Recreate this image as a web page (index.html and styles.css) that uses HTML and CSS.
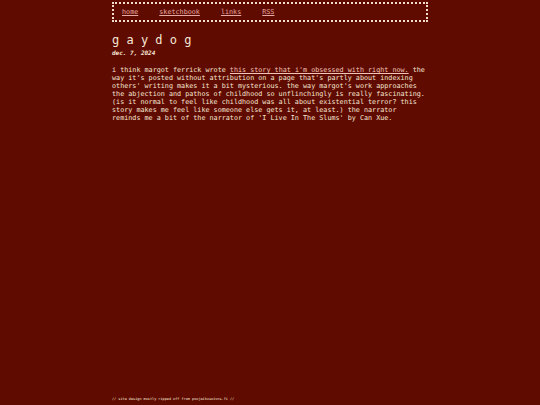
FILE: index.html
```html
<!DOCTYPE html>
<html lang="en">
<head>
<meta charset="utf-8">
<title>gaydog</title>
<link rel="stylesheet" href="styles.css">
</head>
<body>
<div class="page">
  <nav class="nav">
    <a href="#">home</a>
    <a href="#">sketchbook</a>
    <a href="#">links</a>
    <a href="#">RSS</a>
  </nav>
  <main class="post">
    <h1 class="title">g a y d o g</h1>
    <p class="date">dec. 7, 2024</p>
    <p class="body">i think margot ferrick wrote <a href="#">this story that i'm obsessed with right now.</a> the way it's posted without attribution on a page that's partly about indexing others' writing makes it a bit mysterious. the way margot's work approaches the abjection and pathos of childhood so unflinchingly is really fascinating. (is it normal to feel like childhood was all about existential terror? this story makes me feel like someone else gets it, at least.) the narrator reminds me a bit of the narrator of 'I Live In The Slums' by Can Xue.</p>
  </main>
  <footer class="foot">// site design mostly ripped off from poujaikusoivns.fi //</footer>
</div>
</body>
</html>
```

FILE: styles.css
```css
html, body {
  margin: 0;
  padding: 0;
}
body {
  background: #600b00;
  color: #f6e6d6;
  font-family: "DejaVu Sans Mono", "Liberation Mono", monospace;
}
.page {
  width: 316px;
  margin: 0 auto;
  min-height: 100vh;
  display: flex;
  flex-direction: column;
  box-sizing: border-box;
}
.nav {
  margin-top: 2px;
  height: 20px;
  box-sizing: border-box;
  border: 2px dotted #f3dccb;
  padding: 0 8px;
  display: flex;
  align-items: center;
  gap: 21px;
  font-size: 6.75px;
}
.nav a {
  color: #e6a9a4;
}
.title {
  margin: 11px 0 0;
  font-size: 12px;
  line-height: 14px;
  font-weight: normal;
}
.date {
  margin: 2px 0 0;
  font-size: 6px;
  line-height: 8px;
  font-style: italic;
  font-weight: bold;
}
.body {
  margin: 9px 0 0;
  font-size: 6.75px;
  line-height: 8px;
}
.body a {
  color: #f2c4bc;
}
.foot {
  margin-top: auto;
  margin-bottom: 3px;
  font-size: 3.5px;
  line-height: 5px;
}
```
